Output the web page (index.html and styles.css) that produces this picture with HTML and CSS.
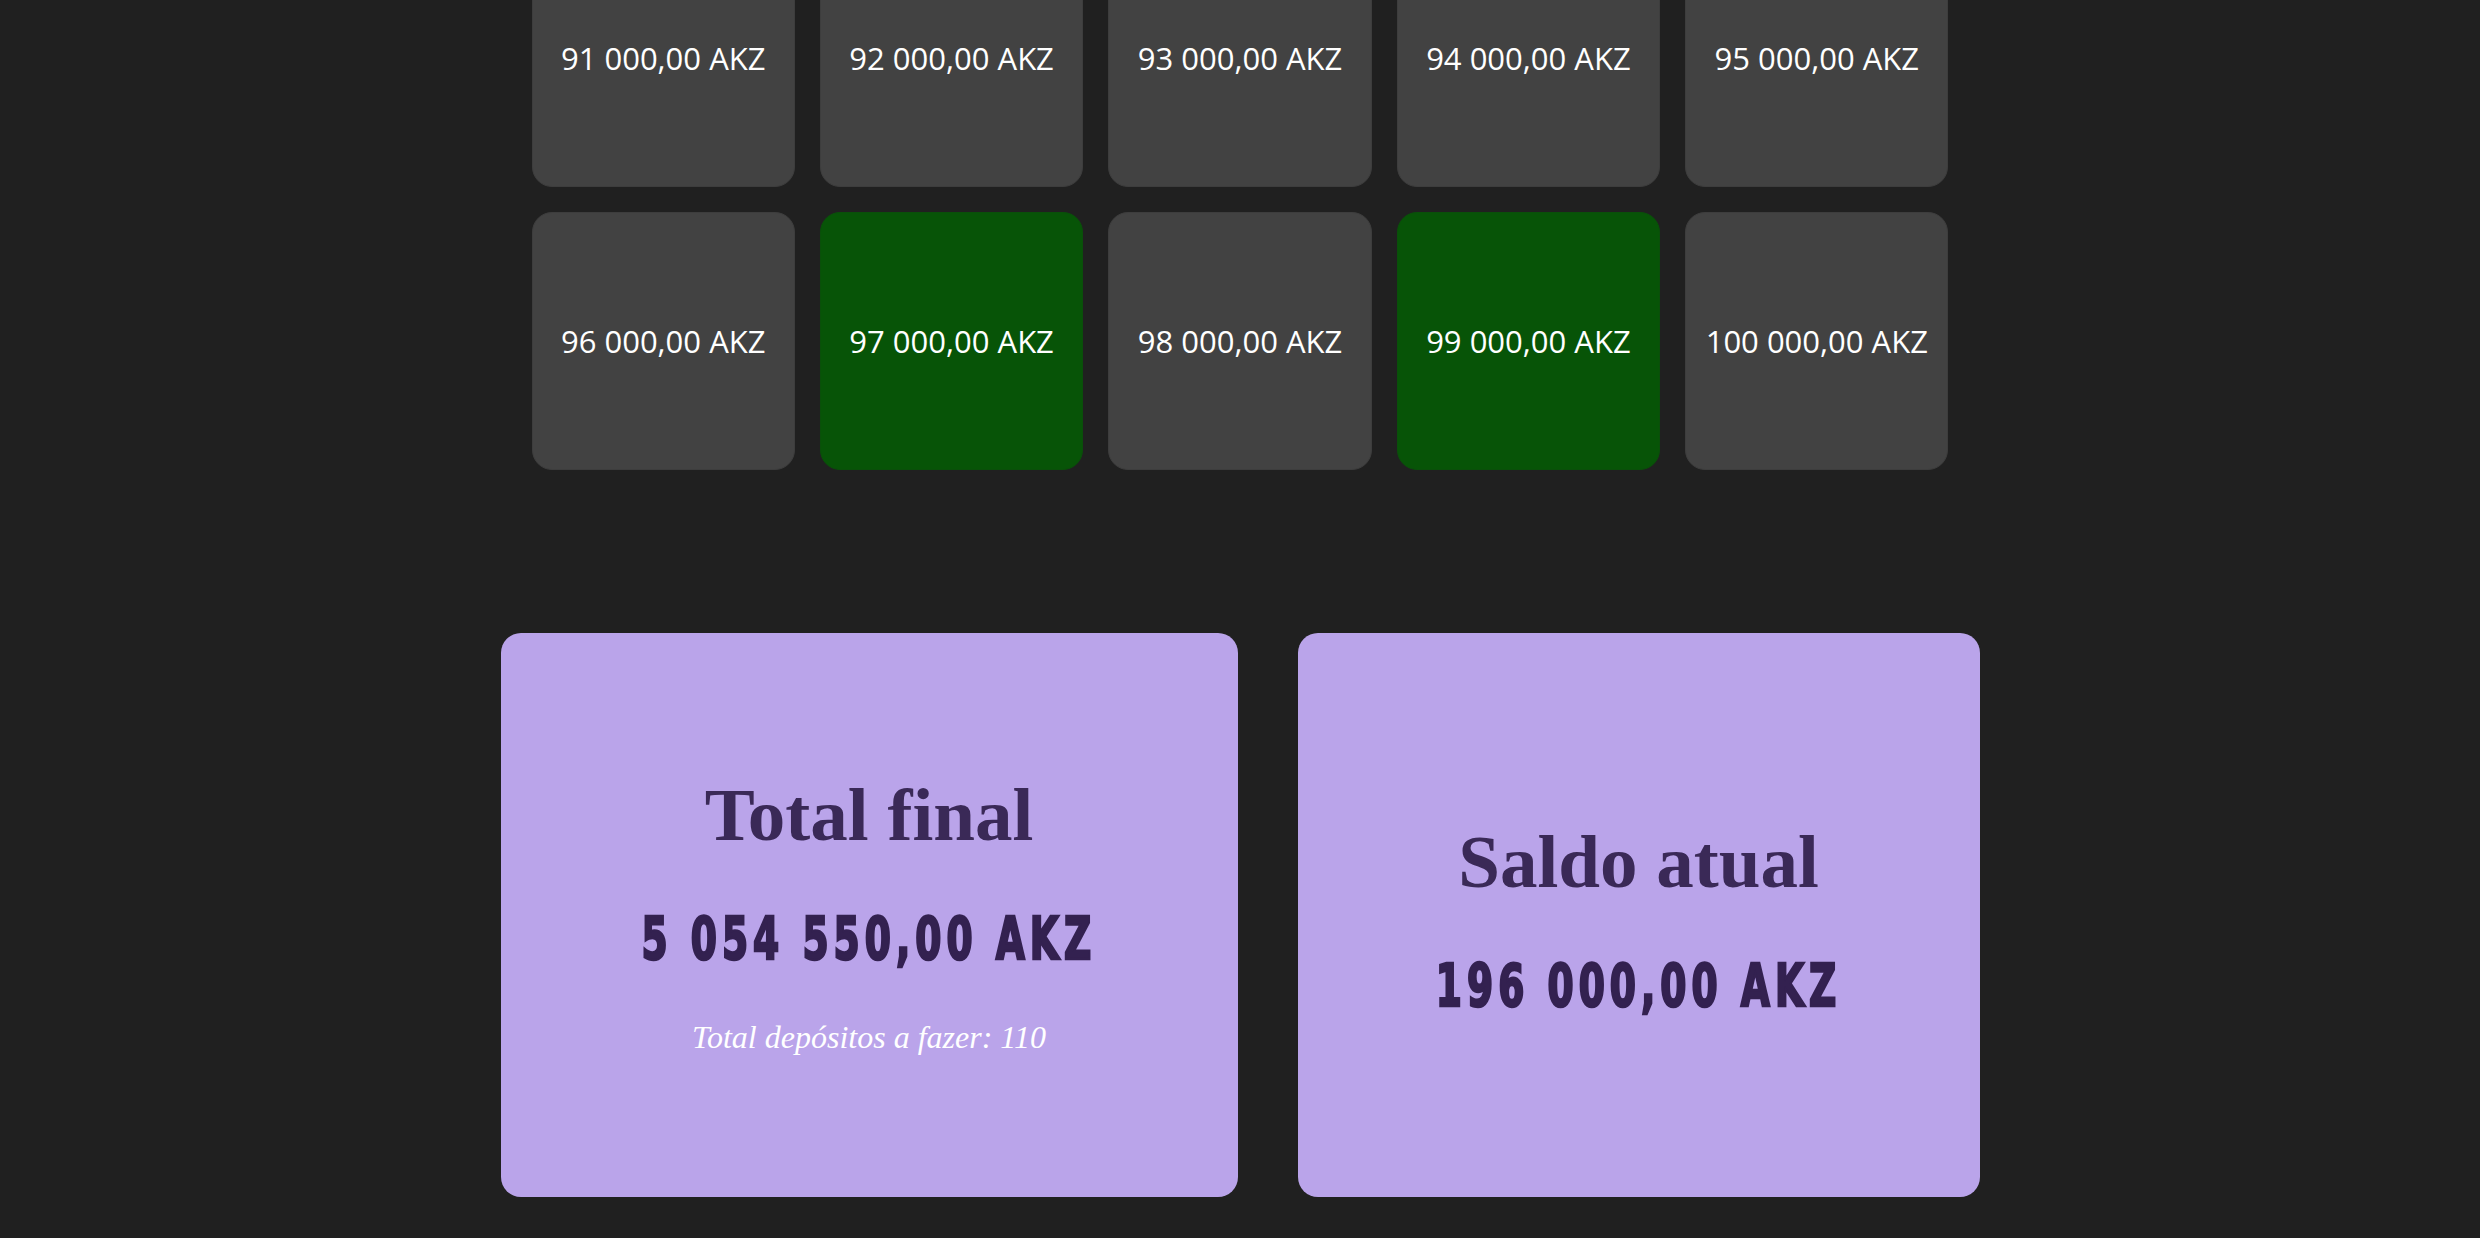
FILE: index.html
```html
<!DOCTYPE html>
<html lang="pt">
<head>
<meta charset="utf-8">
<title>Poupança</title>
<link rel="stylesheet" href="styles.css">
</head>
<body>
<main class="page">
  <section class="tiles">
    <div class="tile">91 000,00 AKZ</div>
    <div class="tile">92 000,00 AKZ</div>
    <div class="tile">93 000,00 AKZ</div>
    <div class="tile">94 000,00 AKZ</div>
    <div class="tile">95 000,00 AKZ</div>
    <div class="tile">96 000,00 AKZ</div>
    <div class="tile tile--done">97 000,00 AKZ</div>
    <div class="tile">98 000,00 AKZ</div>
    <div class="tile tile--done">99 000,00 AKZ</div>
    <div class="tile">100 000,00 AKZ</div>
  </section>
  <section class="summary">
    <div class="summary-card summary-card--total">
      <h2 class="summary-title">Total final</h2>
      <p class="summary-amount">5 054 550,00 AKZ</p>
      <p class="summary-note">Total depósitos a fazer: 110</p>
    </div>
    <div class="summary-card summary-card--balance">
      <h2 class="summary-title">Saldo atual</h2>
      <p class="summary-amount">196 000,00 AKZ</p>
    </div>
  </section>
</main>
</body>
</html>
```
FILE: styles.css
```css
html, body {
  margin: 0;
  padding: 0;
  background: #202020;
}

body {
  font-family: "Open Sans", "Noto Sans", sans-serif;
  color: #ffffff;
  overflow: hidden;
}

.page {
  display: flex;
  flex-direction: column;
  align-items: center;
}

.tiles {
  margin-top: -71px;
  width: 1417px;
  display: grid;
  grid-template-columns: repeat(5, 1fr);
  grid-auto-rows: 258px;
  gap: 25px;
}

.tile {
  display: flex;
  align-items: center;
  justify-content: center;
  background: #424242;
  border: 1px solid #3d3d3d;
  border-radius: 20px;
  font-family: "Open Sans", "Noto Sans", sans-serif;
  font-stretch: 90%;
  font-size: 31px;
  color: #ffffff;
  white-space: nowrap;
}

.tile--done {
  background: #075407;
  border-color: #0a4f0a;
}

.summary {
  margin-top: 163px;
  margin-bottom: 41px;
  display: flex;
  justify-content: center;
  gap: 60px;
}

.summary-card {
  box-sizing: border-box;
  height: 564px;
  background: #baa4ea;
  border-radius: 20px;
  display: flex;
  flex-direction: column;
  align-items: center;
  justify-content: center;
  text-align: center;
}

.summary-card--total {
  width: 737px;
}

.summary-card--balance {
  width: 682px;
}

.summary-title {
  margin: 0 0 61px;
  font-family: "Liberation Serif", "DejaVu Serif", serif;
  font-weight: bold;
  font-size: 75px;
  line-height: 82px;
  color: #3a2957;
}

.summary-amount {
  margin: 0;
  font-family: "DejaVu Sans Condensed", "DejaVu Sans", sans-serif;
  font-weight: bold;
  font-size: 58px;
  line-height: 45px;
  letter-spacing: 7px;
  color: #332150;
  -webkit-text-stroke: 2.5px #332150;
  transform: scaleX(0.72);
  white-space: nowrap;
}

.summary-note {
  margin: 57px 0 0;
  font-family: "Liberation Serif", "DejaVu Serif", serif;
  font-style: italic;
  font-size: 32px;
  line-height: 37px;
  color: #ffffff;
}
```
